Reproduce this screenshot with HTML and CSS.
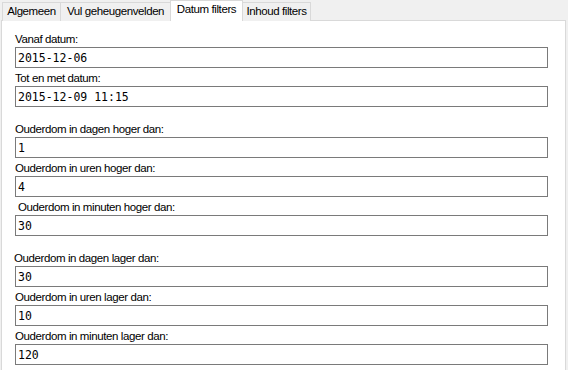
FILE: index.html
```html
<!DOCTYPE html>
<html lang="nl">
<head>
  <meta charset="UTF-8">
  <title>Datum filters</title>
  <link rel="stylesheet" href="styles.css">
</head>
<body>

  <div class="tabs">
    <div class="tab tab-algemeen">Algemeen</div>
    <div class="tab tab-vul">Vul geheugenvelden</div>
    <div class="tab tab-datum active">Datum filters</div>
    <div class="tab tab-inhoud">Inhoud filters</div>
  </div>

  <div class="panel">
    <div class="group">
      <label for="vanaf">Vanaf datum:</label>
      <input type="text" id="vanaf" value="2015-12-06">
      <label for="totmet">Tot en met datum:</label>
      <input type="text" id="totmet" value="2015-12-09 11:15">
    </div>

    <div class="group">
      <label for="dagenHoger">Ouderdom in dagen hoger dan:</label>
      <input type="text" id="dagenHoger" value="1">
      <label for="urenHoger">Ouderdom in uren hoger dan:</label>
      <input type="text" id="urenHoger" value="4">
      <label for="minutenHoger" class="indent">Ouderdom in minuten hoger dan:</label>
      <input type="text" id="minutenHoger" value="30">
    </div>

    <div class="group">
      <label for="dagenLager" class="outdent">Ouderdom in dagen lager dan:</label>
      <input type="text" id="dagenLager" value="30">
      <label for="urenLager">Ouderdom in uren lager dan:</label>
      <input type="text" id="urenLager" value="10">
      <label for="minutenLager">Ouderdom in minuten lager dan:</label>
      <input type="text" id="minutenLager" value="120">
    </div>
  </div>

</body>
</html>
```

FILE: styles.css
```css
body { margin: 0; background: #f0f0f0; font-family: "Liberation Sans", Arial, sans-serif; font-size: 11.5px; letter-spacing: -0.4px; color: #000; overflow: hidden; }

.tabs { display: flex; align-items: flex-end; height: 21px; padding-left: 2px; }
.tab { box-sizing: border-box; height: 19px; margin-right: -1px; border: 1px solid #d9d9d9; border-bottom: none; background: #f0f0f0; text-align: center; line-height: 17px; white-space: nowrap; }
.tab-algemeen { width: 59px; }
.tab-vul { width: 111px; }
.tab-datum { width: 73px; }
.tab-inhoud { width: 69px; }
.tab.active { position: relative; z-index: 1; height: 21px; background: #fff; line-height: 16px; }

.panel { box-sizing: border-box; width: 565px; height: 350px; margin: -1px 0 0 1px; padding: 8px 0 0 13px; border: 1px solid #d9d9d9; border-bottom: none; background: #fff; }
.group + .group { margin-top: 12px; }

label { display: block; padding-top: 3px; line-height: 15px; }
label.indent { padding-left: 3px; }
label.outdent { margin-left: -1px; }

input[type="text"] { display: block; box-sizing: border-box; width: 533px; height: 21px; margin: 0; padding: 0 2px; border: 1px solid #7a7a7a; border-radius: 0; background: #fff; font-family: "DejaVu Sans Mono", "Liberation Mono", monospace; font-size: 11.5px; letter-spacing: 0; color: #000; outline: none; }
```
